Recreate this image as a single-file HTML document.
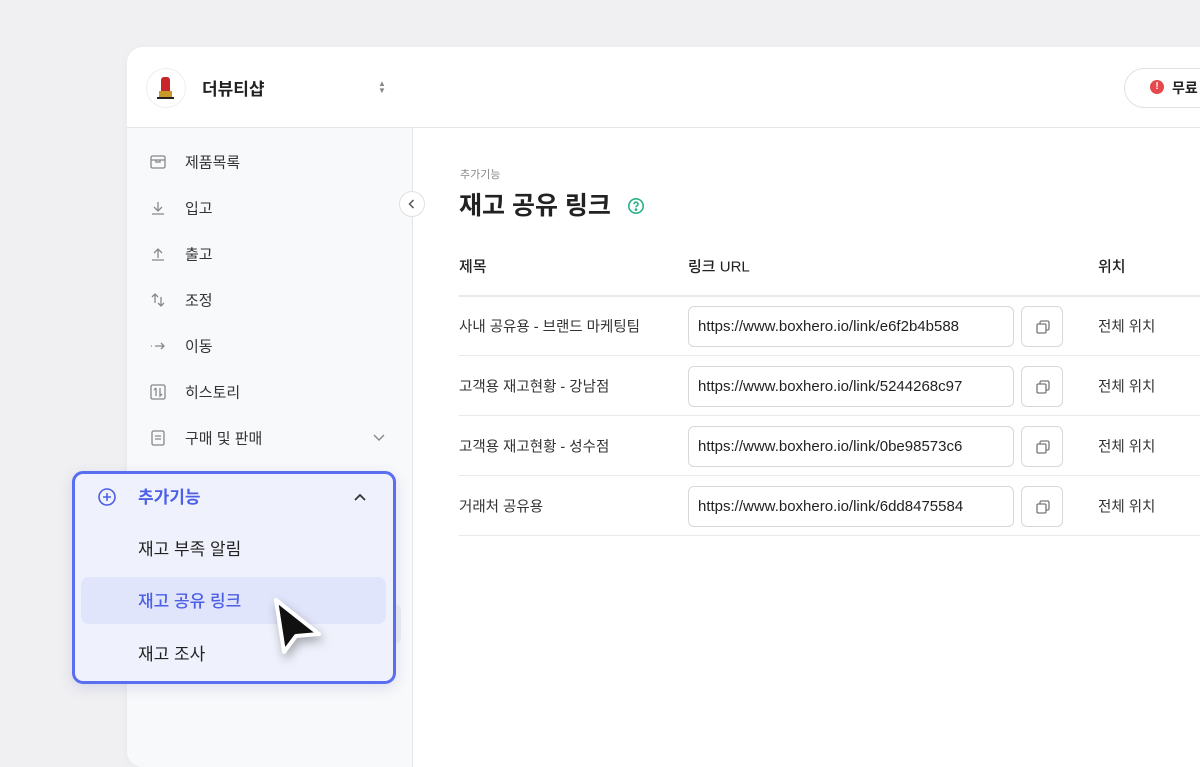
<!DOCTYPE html>
<html><head><meta charset="utf-8"><style>
*{box-sizing:border-box;margin:0;padding:0}
body{width:1200px;height:717px;overflow:hidden;background:#f0f0f2;font-family:"Liberation Sans","Noto Sans CJK KR",sans-serif;position:relative;color:#222}
.card{position:absolute;left:127px;top:47px;width:1100px;height:720px;background:#fff;border-radius:16px;overflow:hidden;box-shadow:0 2px 10px rgba(0,0,0,.04)}
.hdr{position:absolute;left:0;top:0;right:0;height:81px;border-bottom:1px solid #e5e6ea}
.side{position:absolute;left:0;top:81px;width:286px;bottom:0;background:#f8f9fb;border-right:1px solid #e5e6ea}
.abs{position:absolute}
.mi{position:absolute;left:58px;font-size:15px;color:#333;transform:translateY(-50%)}
.ic{position:absolute;left:22px;transform:translateY(-50%)}
.th{position:absolute;font-size:15px;font-weight:500;color:#222;transform:translateY(-50%)}
.td{position:absolute;font-size:14.5px;color:#333;transform:translateY(-50%)}
.line{position:absolute;left:332px;right:0;height:1px;background:#e8e9ec}
.inp{position:absolute;left:561px;width:326px;height:41px;border:1px solid #d6d8dd;border-radius:6px;font-size:15px;color:#222;padding-left:9px;line-height:39px}
.cp{position:absolute;left:894px;width:42px;height:41px;border:1px solid #d6d8dd;border-radius:6px}
.cp svg{position:absolute;left:12px;top:11px}
</style></head><body>
<div class="card">
 <div class="hdr">
  <div class="abs" style="left:19px;top:21px;width:40px;height:40px;border-radius:50%;border:1px solid #eee;background:#fff"></div>
  <div class="abs" style="left:34px;top:30px;width:9px;height:14px;background:#c9252b;border-radius:3px 3px 0 0"></div>
  <div class="abs" style="left:32px;top:44px;width:13px;height:7px;background:#c89a2a"></div>
  <div class="abs" style="left:30px;top:50px;width:17px;height:2px;background:#222"></div>
  <div class="abs" style="left:75px;top:28px;font-size:17px;font-weight:600">더뷰티샵</div>
  <div class="abs" style="left:251px;top:33px;font-size:8px;color:#888;line-height:7px">▲<br>▼</div>
  <div class="abs" style="left:997px;top:21px;width:140px;height:40px;border:1px solid #e0e1e5;border-radius:20px"></div>
  <div class="abs" style="left:1023px;top:33px;width:14px;height:14px;border-radius:50%;background:#e5484d;color:#fff;font-size:10px;font-weight:700;text-align:center;line-height:14px">!</div>
  <div class="abs" style="left:1045px;top:31px;font-size:14px;font-weight:600">무료</div>
 </div>
 <div class="side">
  <svg class="ic" style="top:34px" width="18" height="18" viewBox="0 0 18 18" fill="none" stroke="#888" stroke-width="1.3"><rect x="2" y="3" width="14" height="12" rx="1.5"/><path d="M2 7h14M7 7v2h4V7"/></svg><div class="mi" style="top:34px">제품목록</div>
  <svg class="ic" style="top:80px" width="18" height="18" viewBox="0 0 18 18" fill="none" stroke="#888" stroke-width="1.3"><path d="M9 3v9M5 8l4 4 4-4M3 15h12"/></svg><div class="mi" style="top:80px">입고</div>
  <svg class="ic" style="top:126px" width="18" height="18" viewBox="0 0 18 18" fill="none" stroke="#888" stroke-width="1.3"><path d="M9 13V4M5 8l4-4 4 4M3 15h12"/></svg><div class="mi" style="top:126px">출고</div>
  <svg class="ic" style="top:172px" width="18" height="18" viewBox="0 0 18 18" fill="none" stroke="#888" stroke-width="1.3"><path d="M6 12V3M3 6l3-3 3 3M12 6v9M9 12l3 3 3-3"/></svg><div class="mi" style="top:172px">조정</div>
  <svg class="ic" style="top:218px" width="18" height="18" viewBox="0 0 18 18" fill="none" stroke="#888" stroke-width="1.3"><path d="M2 9h1M6 9h9M12 6l3 3-3 3"/></svg><div class="mi" style="top:218px">이동</div>
  <svg class="ic" style="top:264px" width="18" height="18" viewBox="0 0 18 18" fill="none" stroke="#888" stroke-width="1.3"><rect x="2" y="2" width="14" height="14" rx="1.5"/><path d="M7 13V5M5 7l2-2M11 5v8l2-2"/></svg><div class="mi" style="top:264px">히스토리</div>
  <svg class="ic" style="top:310px" width="18" height="18" viewBox="0 0 18 18" fill="none" stroke="#888" stroke-width="1.3"><rect x="3" y="2" width="12" height="14" rx="1.5"/><path d="M6 7h6M6 10h6"/></svg><div class="mi" style="top:310px">구매 및 판매</div>
  <svg class="abs" style="left:245px;top:305px" width="14" height="10" viewBox="0 0 14 10" fill="none" stroke="#888" stroke-width="1.4"><path d="M2 2l5 5 5-5"/></svg>
  <div class="abs" style="left:260px;top:475px;width:14px;height:42px;background:#eceef2;border-radius:0 8px 8px 0"></div>
 </div>
 <div class="abs" style="left:272px;top:144px;width:26px;height:26px;border-radius:50%;border:1px solid #e0e1e5;background:#fff"></div>
 <svg class="abs" style="left:279px;top:151px" width="12" height="12" viewBox="0 0 12 12" fill="none" stroke="#555" stroke-width="1.5"><path d="M7.5 2L3.5 6l4 4"/></svg>

 <div class="abs" style="left:333px;top:119px;font-size:11px;color:#888">추가기능</div>
 <div class="abs" style="left:332px;top:139px;font-size:25px;font-weight:700;color:#222">재고 공유 링크</div>
 <svg class="abs" style="left:500px;top:150px" width="18" height="18" viewBox="0 0 18 18" fill="none" stroke="#2bb08a" stroke-width="1.6"><circle cx="9" cy="9" r="7.2"/><path d="M7 7.2a2 2 0 1 1 2.6 1.9c-.5.2-.6.5-.6 1.2" /><circle cx="9" cy="12.6" r=".6" fill="#2bb08a"/></svg>

 <div class="th" style="left:332px;top:219px">제목</div>
 <div class="th" style="left:561px;top:219px">링크 URL</div>
 <div class="th" style="left:971px;top:219px">위치</div>
 <div class="line" style="top:248px;height:2px"></div>

 <div class="td" style="left:332px;top:279px">사내 공유용 - 브랜드 마케팅팀</div>
 <div class="inp" style="top:259px">https://www.boxhero.io/link/e6f2b4b588</div>
 <div class="cp" style="top:259px"><svg width="18" height="18" viewBox="0 0 18 18" fill="none" stroke="#777" stroke-width="1.3"><rect x="3" y="6" width="9" height="9" rx="1.2"/><path d="M6 6V4.5A1.5 1.5 0 0 1 7.5 3h6A1.5 1.5 0 0 1 15 4.5v6a1.5 1.5 0 0 1-1.5 1.5H12"/></svg></div>
 <div class="td" style="left:971px;top:279px">전체 위치</div>
 <div class="line" style="top:308px"></div>

 <div class="td" style="left:332px;top:339px">고객용 재고현황 - 강남점</div>
 <div class="inp" style="top:319px">https://www.boxhero.io/link/5244268c97</div>
 <div class="cp" style="top:319px"><svg width="18" height="18" viewBox="0 0 18 18" fill="none" stroke="#777" stroke-width="1.3"><rect x="3" y="6" width="9" height="9" rx="1.2"/><path d="M6 6V4.5A1.5 1.5 0 0 1 7.5 3h6A1.5 1.5 0 0 1 15 4.5v6a1.5 1.5 0 0 1-1.5 1.5H12"/></svg></div>
 <div class="td" style="left:971px;top:339px">전체 위치</div>
 <div class="line" style="top:368px"></div>

 <div class="td" style="left:332px;top:399px">고객용 재고현황 - 성수점</div>
 <div class="inp" style="top:379px">https://www.boxhero.io/link/0be98573c6</div>
 <div class="cp" style="top:379px"><svg width="18" height="18" viewBox="0 0 18 18" fill="none" stroke="#777" stroke-width="1.3"><rect x="3" y="6" width="9" height="9" rx="1.2"/><path d="M6 6V4.5A1.5 1.5 0 0 1 7.5 3h6A1.5 1.5 0 0 1 15 4.5v6a1.5 1.5 0 0 1-1.5 1.5H12"/></svg></div>
 <div class="td" style="left:971px;top:399px">전체 위치</div>
 <div class="line" style="top:428px"></div>

 <div class="td" style="left:332px;top:459px">거래처 공유용</div>
 <div class="inp" style="top:439px">https://www.boxhero.io/link/6dd8475584</div>
 <div class="cp" style="top:439px"><svg width="18" height="18" viewBox="0 0 18 18" fill="none" stroke="#777" stroke-width="1.3"><rect x="3" y="6" width="9" height="9" rx="1.2"/><path d="M6 6V4.5A1.5 1.5 0 0 1 7.5 3h6A1.5 1.5 0 0 1 15 4.5v6a1.5 1.5 0 0 1-1.5 1.5H12"/></svg></div>
 <div class="td" style="left:971px;top:459px">전체 위치</div>
 <div class="line" style="top:488px"></div>
</div>

<div class="abs" style="left:72px;top:471px;width:324px;height:213px;border:3.5px solid #5a6ff0;border-radius:11px;background:#eff1fc;box-shadow:0 4px 14px rgba(60,70,160,.15)">
 <svg class="abs" style="left:22px;top:13px" width="20" height="20" viewBox="0 0 20 20" fill="none" stroke="#4c5fe6" stroke-width="1.6"><circle cx="10" cy="10" r="8"/><path d="M10 6v8M6 10h8"/></svg>
 <div class="abs" style="left:63px;top:9px;font-size:17px;font-weight:600;color:#4c5fe6">추가기능</div>
 <svg class="abs" style="left:278px;top:18px" width="14" height="10" viewBox="0 0 14 10" fill="none" stroke="#333" stroke-width="1.8"><path d="M2 8l5-5 5 5"/></svg>
 <div class="abs" style="left:63px;top:61px;font-size:17px;color:#222">재고 부족 알림</div>
 <div class="abs" style="left:6px;top:103px;width:305px;height:47px;border-radius:8px;background:#e1e5fb"></div>
 <div class="abs" style="left:63px;top:113px;font-size:17px;color:#4c5fe6;font-weight:500">재고 공유 링크</div>
 <div class="abs" style="left:63px;top:166px;font-size:17px;color:#222">재고 조사</div>
</div>
<svg class="abs" style="left:262px;top:592px;filter:drop-shadow(2px 5px 5px rgba(0,0,0,.3))" width="70" height="70" viewBox="0 0 70 70"><path d="M14 8L22 60L34 44L57 42Z" fill="#111" stroke="#fff" stroke-width="4" stroke-linejoin="round"/></svg>
</body></html>
